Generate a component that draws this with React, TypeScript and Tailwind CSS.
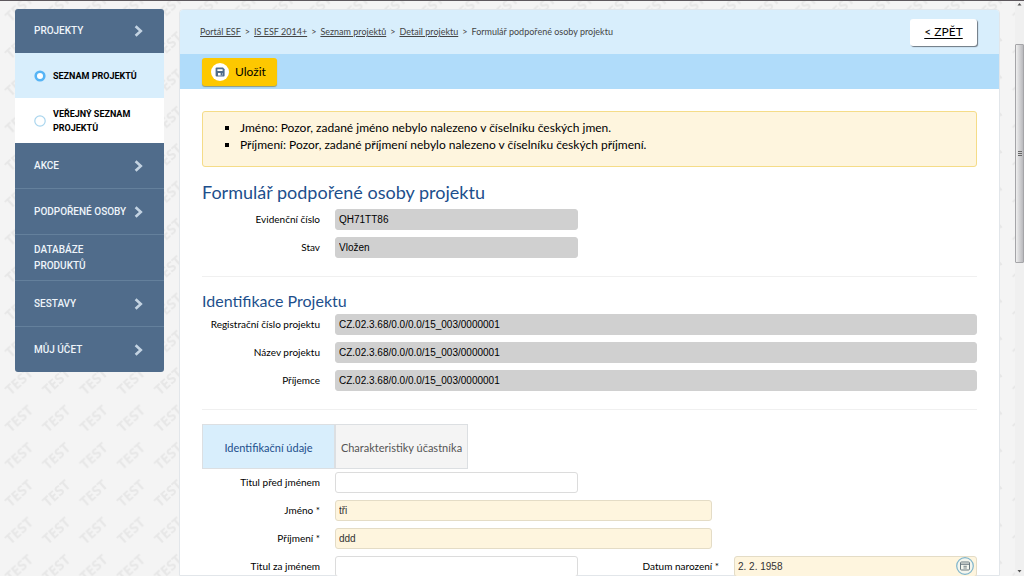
import { useState } from "react"

const menuTop = { id: 1, name: "PROJEKTY", href: "#projekty" }

const subLinks = [
  { id: 1, name: "SEZNAM PROJEKTŮ", href: "#seznam", active: true },
  { id: 2, name: "VEŘEJNÝ SEZNAM PROJEKTŮ", href: "#verejny-seznam", active: false },
]

const menuLinks = [
  { id: 2, name: "AKCE", href: "#akce", arrow: true },
  { id: 3, name: "PODPOŘENÉ OSOBY", href: "#osoby", arrow: true },
  { id: 4, name: "DATABÁZE PRODUKTŮ", href: "#databaze", arrow: false },
  { id: 5, name: "SESTAVY", href: "#sestavy", arrow: true },
  { id: 6, name: "MŮJ ÚČET", href: "#ucet", arrow: true },
]

const crumbs = ["Portál ESF", "IS ESF 2014+", "Seznam projektů", "Detail projektu"]

const tabs = ["Identifikační údaje", "Charakteristiky účastníka"]

function Chevron() {
  return (
    <svg viewBox="0 0 9 12" className="h-3 w-[9px] shrink-0" fill="none" stroke="#c3d3e2" strokeWidth="2.6">
      <path d="M1.6 1.2 L6.8 6 L1.6 10.8" />
    </svg>
  )
}

function Watermark() {
  return (
    <svg className="absolute inset-0 h-full w-full" aria-hidden="true">
      <defs>
        <pattern id="test" width="37.33" height="37.33" patternUnits="userSpaceOnUse" y="-12">
          <text
            x="18.6"
            y="18.6"
            transform="rotate(-42 18.6 18.6)"
            textAnchor="middle"
            dominantBaseline="central"
            fontFamily="Open Sans, sans-serif"
            fontSize="14"
            fontWeight="700"
            fill="#e7e7e7"
          >
            TEST
          </text>
        </pattern>
      </defs>
      <rect width="100%" height="100%" fill="url(#test)" />
    </svg>
  )
}

function Sidebar() {
  return (
    <nav className="w-[149px] shrink-0 self-start overflow-hidden rounded-[3px] bg-[#506c8b] font-[Roboto,sans-serif] text-[10px] leading-4 font-medium text-[#eef4fa]">
      <a href={menuTop.href} className="flex h-11 items-center justify-between pr-[21px] pl-[19px]">
        {menuTop.name}
        <Chevron />
      </a>

      {subLinks.map((link) => (
        <a
          key={link.id}
          href={link.href}
          className={`flex h-[45px] items-center gap-[7px] pr-4 pl-[19px] text-[9px] leading-[14px] font-bold text-black ${link.active ? "bg-[#d8eefc]" : "bg-white"}`}
        >
          <svg viewBox="0 0 12 12" className="h-3 w-3 shrink-0">
            {link.active ? (
              <circle cx="6" cy="6" r="4.3" fill="#fff" stroke="#56b4f5" strokeWidth="2.6" />
            ) : (
              <circle cx="6" cy="6" r="5.2" fill="#fff" stroke="#a9d5ee" strokeWidth="1.2" />
            )}
          </svg>
          <span className="max-w-[90px]">{link.name}</span>
        </a>
      ))}

      {menuLinks.map((link) => (
        <a
          key={link.id}
          href={link.href}
          className="flex h-[46px] items-center justify-between border-b border-[#64809c] pr-[21px] pl-[19px] last:h-[45px] last:border-b-0"
        >
          <span className={link.arrow ? "whitespace-nowrap" : "w-20"}>{link.name}</span>
          {link.arrow && <Chevron />}
        </a>
      ))}
    </nav>
  )
}

type FieldProps = {
  id: string
  label: string
  value?: string
  width?: string
  look?: "locked" | "empty" | "required"
}

const looks = {
  locked: "bg-[#d0d0d0] border-[#d0d0d0] text-black",
  empty: "bg-white border-[#dcdcdc] text-[#333]",
  required: "bg-[#fef5de] border-[#e4dcc6] text-[#333]",
}

function Field({ id, label, value = "", width = "w-full", look = "locked" }: FieldProps) {
  return (
    <div className="flex items-center gap-[15px]">
      <label htmlFor={id} className="w-[118px] shrink-0 pb-[2px] text-right whitespace-nowrap">
        {label}
      </label>
      <input
        id={id}
        type="text"
        defaultValue={value}
        readOnly={look === "locked"}
        className={`h-[21px] min-w-0 rounded-[3px] border px-[3px] font-['Liberation_Sans',sans-serif] ${width} ${looks[look]}`}
      />
    </div>
  )
}

function Scrollbar() {
  return (
    <div className="relative flex w-[9px] shrink-0 flex-col items-center bg-[#f0f0f0]" aria-hidden="true">
      <svg viewBox="0 0 9 43" className="h-[43px] w-[9px]">
        <path d="M4.5 2 L6.5 4.5 H2.5 Z" fill="#555" />
      </svg>
      <div className="flex h-[219px] w-full items-center justify-center rounded-[1px] border border-[#a5a5a8] bg-linear-to-r from-[#efefef] to-[#b9b9bd]">
        <svg viewBox="0 0 4 5" className="h-[5px] w-1">
          <path d="M0 .5H4M0 2.5H4M0 4.5H4" stroke="#666" strokeWidth="1" />
        </svg>
      </div>
      <svg viewBox="0 0 9 8" className="mt-auto h-2 w-[9px]">
        <path d="M2.5 2 H6.5 L4.5 4.5 Z" fill="#555" />
      </svg>
    </div>
  )
}

export default function App() {
  const [tab, setTab] = useState(0)

  return (
    <div className="flex h-screen flex-col overflow-hidden bg-[#f4f4f4] font-['Lato',sans-serif] text-[10px] leading-[14px] text-black">
      <div className="h-px shrink-0 bg-[#5d585d]" />
      <div className="flex min-h-0 flex-1">
        <div className="relative flex min-w-0 flex-1 overflow-hidden">
          <Watermark />
          <div className="relative flex min-w-0 flex-1 gap-[15px] pt-2 pr-[15px] pl-[15px]">
            <Sidebar />

            <main className="min-w-0 flex-1 rounded-t-[4px] border border-[#e2e6ea] bg-white">
              <header className="flex h-11 items-center justify-between rounded-t-[3px] bg-[#d8eefc] pr-[22px] pl-5">
                <div className="flex gap-1 text-[9px] text-[#444]">
                  {crumbs.map((name) => (
                    <span key={name} className="flex gap-1">
                      <a href="#" className="underline">{name}</a>
                      <span>&gt;</span>
                    </span>
                  ))}
                  <span>Formulář podpořené osoby projektu</span>
                </div>
                <button className="h-[27px] w-[67px] rounded-[3px] bg-white text-[12px] underline underline-offset-2 shadow-[1px_1px_1px_#6c7680]">
                  &lt; ZPĚT
                </button>
              </header>

              <div className="flex h-[35px] items-center bg-[#b0dcfa] px-[22px]">
                <button className="flex h-7 w-[75px] items-center gap-[6px] rounded-[3px] bg-[#fdc800] pl-[9px] text-[12px] shadow-[0_1px_1px_#8d9a80]">
                  <svg viewBox="0 0 18 18" className="h-[18px] w-[18px]">
                    <circle cx="9" cy="9" r="9" fill="#fff" />
                    <path d="M4.6 5.6 Q4.6 4.6 5.6 4.6 H12 L13.6 6.2 V12.6 Q13.6 13.6 12.6 13.6 H5.6 Q4.6 13.6 4.6 12.6 Z" fill="#506c8b" />
                    <path d="M6.4 6.2 H11.6 V8 H6.4 Z M7 10 H11.4 V12.4 H7 Z" fill="#fff" />
                    <path d="M9.6 10 H11 V12.4 H9.6 Z" fill="#506c8b" />
                  </svg>
                  Uložit
                </button>
              </div>

              <form className="px-[22px] pt-[22px]">
                <ul className="h-14 list-[square] rounded-[3px] border border-[#f5dc88] bg-[#fef5de] pt-[7px] pl-[37px] text-[12px] leading-[17px]">
                  <li>Jméno: Pozor, zadané jméno nebylo nalezeno v číselníku českých jmen.</li>
                  <li>Příjmení: Pozor, zadané příjmení nebylo nalezeno v číselníku českých příjmení.</li>
                </ul>

                <h1 className="mt-[13px] mb-[5px] text-[18px] leading-6 text-[#1d4f8c]">Formulář podpořené osoby projektu</h1>
                <div className="flex flex-col gap-[7px]">
                  <Field id="cislo" label="Evidenční číslo" value="QH71TT86" width="w-[243px]" />
                  <Field id="stav" label="Stav" value="Vložen" width="w-[243px]" />
                </div>

                <hr className="mt-[18px] border-[#f0f0f0]" />
                <h2 className="mt-[14px] mb-[3px] text-[16px] leading-5 text-[#1d4f8c]">Identifikace Projektu</h2>
                <div className="flex flex-col gap-[7px]">
                  <Field id="registrace" label="Registrační číslo projektu" value="CZ.02.3.68/0.0/0.0/15_003/0000001" />
                  <Field id="nazev" label="Název projektu" value="CZ.02.3.68/0.0/0.0/15_003/0000001" />
                  <Field id="prijemce" label="Příjemce" value="CZ.02.3.68/0.0/0.0/15_003/0000001" />
                </div>

                <hr className="mt-[18px] border-[#f0f0f0]" />
                <div role="tablist" className="mt-[14px] mb-[3px] flex">
                  {tabs.map((name, i) => (
                    <button
                      key={name}
                      type="button"
                      role="tab"
                      aria-selected={tab === i}
                      onClick={() => setTab(i)}
                      className={`h-[45px] w-[133px] border border-[#dcdfe2] pt-[3px] text-[11px] whitespace-nowrap ${tab === i ? "bg-[#d8eefc] text-[#1d4f8c]" : "bg-[#f4f4f4] text-[#555]"}`}
                    >
                      {name}
                    </button>
                  ))}
                </div>

                <div className="flex flex-col gap-[7px]">
                  <Field id="titul-pred" label="Titul před jménem" width="w-[243px]" look="empty" />
                  <Field id="jmeno" label="Jméno *" value="tři" width="w-[377px]" look="required" />
                  <Field id="prijmeni" label="Příjmení *" value="ddd" width="w-[377px]" look="required" />
                  <div className="flex items-center justify-between">
                    <Field id="titul-za" label="Titul za jménem" width="w-[243px]" look="empty" />
                    <div className="relative">
                      <Field id="narozeni" label="Datum narození *" value="2. 2. 1958" width="w-[243px]" look="required" />
                      <button type="button" aria-label="Kalendář" className="absolute top-px right-[3px]">
                        <svg viewBox="0 0 18 18" className="h-[18px] w-[18px]" fill="none">
                          <circle cx="9" cy="9" r="8.3" fill="#f4f6ee" stroke="#7fb5cc" strokeWidth="1.2" />
                          <rect x="4.5" y="5" width="9" height="8" rx="1" stroke="#6b7a80" />
                          <path d="M4.5 7.2 H13.5" stroke="#6b7a80" strokeWidth="1.2" />
                          <path d="M7.5 9.3 H10.8 M7.5 11 H10.8" stroke="#6b7a80" strokeWidth=".9" />
                        </svg>
                      </button>
                    </div>
                  </div>
                </div>
              </form>
            </main>
          </div>
        </div>
        <Scrollbar />
      </div>
    </div>
  )
}
